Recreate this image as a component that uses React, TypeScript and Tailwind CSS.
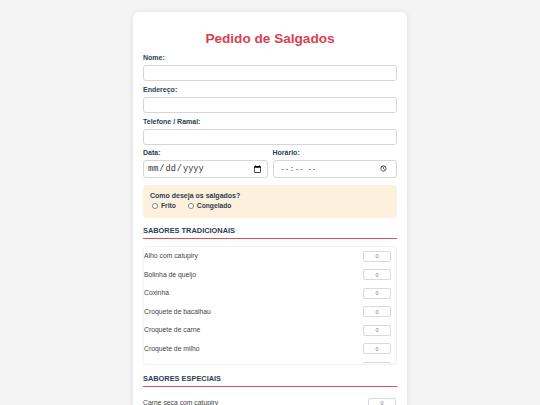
import React from "react";

const tradicionais = [
  "Alho com catupiry",
  "Bolinha de queijo",
  "Coxinha",
  "Croquete de bacalhau",
  "Croquete de carne",
  "Croquete de milho",
  "Mini pastel de carne",
  "Mini pastel de queijo",
];

const especiais = ["Carne seca com catupiry", "Camarão"];

const Label = ({ children }: { children: React.ReactNode }) => (
  <label className="block text-[7px] leading-[10px] font-bold text-[#2c3e50] mb-[2px]">
    {children}
  </label>
);

const TextField = () => (
  <input
    type="text"
    className="block w-full h-[16px] rounded-[3px] border border-[#d6d6d6] bg-white outline-none"
  />
);

const SectionTitle = ({ children }: { children: React.ReactNode }) => (
  <div className="mt-[9px] pb-[2px] border-b border-[#d9525e] text-[7.4px] leading-[10px] font-bold text-[#2c3e50]">
    {children}
  </div>
);

const Qty = () => (
  <input
    type="text"
    defaultValue="0"
    className="w-[28px] h-[11px] rounded-[2px] border border-[#d9d9d9] bg-white text-center text-[5.5px] text-[#777] outline-none"
  />
);

const mono = { fontFamily: '"Liberation Mono", "Courier New", monospace' };

export default function App() {
  return (
    <div
      className="min-h-[405px] w-[540px] bg-[#f4f4f4] pt-[12px]"
      style={{ fontFamily: '"Liberation Sans", Arial, sans-serif' }}
    >
      <div className="mx-auto w-[274px] h-[420px] overflow-hidden rounded-[6px] bg-white px-[10px] pt-[17px] shadow-[0_1px_6px_rgba(0,0,0,0.1)]">
        <h1 className="text-center text-[13.6px] leading-[20px] font-bold text-[#d9414f]">
          Pedido de Salgados
        </h1>

        <div className="mt-[4px] mb-[4px]">
          <Label>Nome:</Label>
          <TextField />
        </div>
        <div className="mb-[4px]">
          <Label>Endereço:</Label>
          <TextField />
        </div>
        <div className="mb-[3px]">
          <Label>Telefone / Ramal:</Label>
          <TextField />
        </div>

        <div className="flex gap-[5px]">
          <div className="flex-1">
            <Label>Data:</Label>
            <input
              type="date"
              style={mono}
              className="block w-full h-[18px] rounded-[3px] border border-[#d6d6d6] bg-white px-[3px] text-[8.6px] text-[#333] outline-none"
            />
          </div>
          <div className="flex-1">
            <Label>Horário:</Label>
            <input
              type="time"
              style={mono}
              className="block w-full h-[18px] rounded-[3px] border border-[#d6d6d6] bg-white px-[6px] text-[7px] text-[#333] outline-none"
            />
          </div>
        </div>

        <div className="mt-[7px] rounded-[4px] bg-[#fdf0dd] px-[7px] pt-[6px] pb-[7px]">
          <div className="text-[7px] leading-[10px] font-bold text-[#2c3e50]">
            Como deseja os salgados?
          </div>
          <div className="flex items-center h-[10px] pl-[2px] text-[6.7px] font-bold text-[#2c3e50]">
            <span className="inline-block w-[6px] h-[6px] rounded-full border border-[#888] bg-white" />
            <span className="ml-[3px]">Frito</span>
            <span className="ml-[12px] inline-block w-[6px] h-[6px] rounded-full border border-[#888] bg-white" />
            <span className="ml-[3px]">Congelado</span>
          </div>
        </div>

        <div className="-mt-[1px]">
          <SectionTitle>SABORES TRADICIONAIS</SectionTitle>
        </div>

        <div className="mt-[7px] h-[119px] overflow-hidden rounded-[3px] border border-[#f2f2f2] pr-[5px]">
          {tradicionais.map((s) => (
            <div key={s} className="flex h-[18.5px] items-center justify-between">
              <span className="text-[6.8px] text-[#444]">{s}</span>
              <Qty />
            </div>
          ))}
        </div>

        <SectionTitle>SABORES ESPECIAIS</SectionTitle>

        <div className="mt-[7px]">
          {especiais.map((s) => (
            <div key={s} className="flex h-[18.5px] items-center justify-between pr-[1px]">
              <span className="text-[6.8px] text-[#444]">{s}</span>
              <Qty />
            </div>
          ))}
        </div>
      </div>
    </div>
  );
}
